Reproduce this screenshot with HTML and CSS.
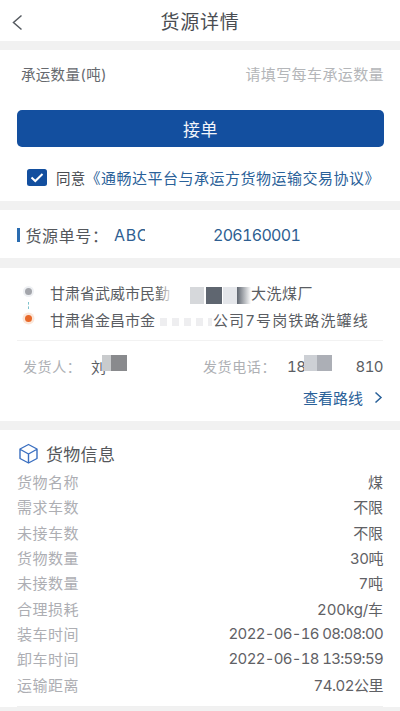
FILE: index.html
```html
<!DOCTYPE html>
<html lang="zh-CN">
<head>
<meta charset="utf-8">
<title>货源详情</title>
<link rel="stylesheet" href="styles.css">
</head>
<body>
<div class="page">
  <header class="topbar">
    <svg class="back" width="14" height="18" viewBox="0 0 14 18"><path d="M11.500 1.500 3.500 8.500l8 7" fill="none" stroke="#555a60" stroke-width="1.500"/></svg>
    <h1 class="title">货源详情</h1>
  </header>

  <section class="card accept">
    <div class="qty"><span class="qty-label">承运数量(吨)</span><span class="qty-hint">请填写每车承运数量</span></div>
    <button class="btn">接单</button>
    <div class="agree">
      <svg class="check" width="20" height="17" viewBox="0 0 20 17"><rect width="20" height="17" rx="2.500" fill="#134f9f"/><path d="M4.500 8.500 8.300 12l7.200-7" fill="none" stroke="#fff" stroke-width="2"/></svg>
      <span class="agree-text">同意</span><span class="agree-link">《通畅达平台与承运方货物运输交易协议》</span>
    </div>
  </section>

  <section class="card order">
    <i class="bar"></i><span class="order-label">货源单号：</span><span class="order-a">ABC</span><i class="order-mask"></i><span class="order-b">206160001</span>
  </section>

  <section class="card route">
    <div class="stops">
      <div class="stop">
        <span class="dot dot-gray"></span><span class="addr a1">甘肃省武威市民勤</span><span class="addr a1b">大洗煤厂</span>
      </div>
      <i class="link"></i>
      <div class="stop">
        <span class="dot dot-orange"></span><span class="addr a2">甘肃省金昌市金</span><span class="addr a2b">公司7号岗铁路洗罐线</span>
      </div>
      <div class="mask"><i class="m1"></i><i class="m2"></i><i class="m3"></i><i class="m4"></i><i class="m5"></i><i class="m6"></i></div>
    </div>
    <div class="people">
      <span class="p-label">发货人：</span><span class="p-val p-name">刘</span><span class="blk blk-name"></span>
      <span class="p-label p-phone">发货电话：</span><span class="p-val p-18">18</span><span class="blk blk-p1"></span><span class="blk blk-p2"></span><span class="p-val p-810">810</span>
    </div>
    <div class="path"><span>查看路线</span>
      <svg width="9" height="13" viewBox="0 0 9 13"><path d="M1.500 1.500 7 6.500l-5.500 5" fill="none" stroke="#2a6199" stroke-width="1.500"/></svg>
    </div>
  </section>

  <section class="card goods">
    <div class="goods-head">
      <svg width="21" height="21" viewBox="0 0 21 21"><path d="M10.500 1.500 19 6v9.500l-8.500 4.500L2 15.500V6zM2.500 6.500l8 4.500 8-4.500M10.500 11v8.500" fill="none" stroke="#3a6fc0" stroke-width="1.400" stroke-linejoin="round"/></svg>
      <span>货物信息</span>
    </div>
    <div class="rows">
      <div class="row"><span class="k">货物名称</span><span class="v">煤</span></div>
      <div class="row"><span class="k">需求车数</span><span class="v">不限</span></div>
      <div class="row"><span class="k">未接车数</span><span class="v">不限</span></div>
      <div class="row"><span class="k">货物数量</span><span class="v v-num">30吨</span></div>
      <div class="row"><span class="k">未接数量</span><span class="v">7吨</span></div>
      <div class="row"><span class="k">合理损耗</span><span class="v">200kg/车</span></div>
      <div class="row"><span class="k">装车时间</span><span class="v v-time">2022-06-16 08:08:00</span></div>
      <div class="row"><span class="k">卸车时间</span><span class="v v-time">2022-06-18 13:59:59</span></div>
      <div class="row"><span class="k">运输距离</span><span class="v v-num">74.02公里</span></div>
    </div>
    <div class="rule"></div>
  </section>
</div>
</body>
</html>
```

FILE: styles.css
```css
* { box-sizing: border-box; }
html, body { margin: 0; padding: 0; }
body { width: 400px; height: 711px; overflow: hidden; background: #f1f1f1; font-family: Inter, "Noto Sans CJK SC", "Noto Sans", sans-serif; font-variant-numeric: tabular-nums; }
.page { display: flex; flex-direction: column; }
.card { background: #fff; }

.topbar { height: 41px; padding-top: 4px; background: #fff; display: flex; align-items: center; justify-content: center; position: relative; margin-bottom: 9px; }
.back { position: absolute; left: 10px; top: 14px; }
.title { margin: 0; font-size: 19px; font-weight: 400; color: #4a4d52; letter-spacing: .8px; line-height: 37px; }

.accept { height: 151px; margin-bottom: 9px; padding: 0 16px 0 17px; display: flex; flex-direction: column; }
.qty { height: 46px; margin-bottom: 14px; display: flex; justify-content: space-between; align-items: center; padding: 0 0 0 4px; }
.qty-label { font-size: 14.500px; color: #66696e; letter-spacing: .3px; }
.qty-hint { font-size: 15px; letter-spacing: .4px; color: #b4b6b9; }
.btn { height: 37px; width: 367px; border: 0; border-radius: 5px; background: #134f9f; color: #f2f5fa; font: inherit; font-size: 17px; letter-spacing: .5px; padding: 0; }
.agree { display: flex; align-items: center; margin-top: 20px; padding-left: 10px; height: 20px; }
.check { flex: none; margin-right: 9px; }
.agree-text { font-size: 14.500px; color: #4a4d52; letter-spacing: .3px; }
.agree-link { font-size: 15px; color: #2a6199; letter-spacing: .5px; white-space: nowrap; }

.order { height: 48px; padding-top: 2px; margin-bottom: 10px; display: flex; align-items: center; padding-left: 17px; position: relative; }
.bar { width: 2.500px; height: 14px; background: #2a6cb0; margin-right: 6px; }
.order-label { font-size: 16px; color: #55585c; letter-spacing: .6px; width: 88.500px; white-space: nowrap; }
.order-a { font-size: 16px; letter-spacing: .6px; color: #2f5f92; width: 32px; white-space: nowrap; }
.order-mask { position: absolute; left: 145px; top: 0; bottom: 0; width: 14px; background: #fff; }
.order-b { font-size: 16px; letter-spacing: -.7px; color: #2f5f92; margin-left: 67px; }

.route { height: 153px; margin-bottom: 9px; padding: 0 17px; }
.stops { position: relative; height: 73px; border-bottom: 1px solid #f2f2f2; padding-top: 14px; }
.stop { display: flex; align-items: center; height: 20px; position: relative; }
.link { display: block; margin-left: 11px; width: 1px; height: 7px; border-left: 1px dashed #7fc3cc; }
.dot { position: absolute; border-radius: 50%; width: 7px; height: 7px; left: 7.500px; }
.dot-gray { background: #a3a5ab; box-shadow: 0 0 0 2px #eef0f3; top: 6px; }
.dot-orange { background: #e8692a; box-shadow: 0 0 0 2.500px #fbe7da; top: 6px; }
.addr { font-size: 15px; color: #5a5d63; white-space: nowrap; position: absolute; }
.a1 { left: 33px; }
.a1b { left: 234px; letter-spacing: .5px; }
.a2 { left: 33px; }
.a2b { left: 196px; letter-spacing: 1.100px; }
.mask { position: absolute; inset: 0; pointer-events: none; }
.mask i { position: absolute; display: block; }
.m1 { left: 140px; top: 14px; width: 56px; height: 32px; background: linear-gradient(90deg, rgba(255,255,255,0), #fff 30%, #fff 100%); }
.m2 { left: 173px; top: 19px; width: 14px; height: 17px; background: #d6d8db; }
.m3 { left: 189px; top: 19px; width: 16px; height: 17px; background: #5f6670; }
.m4 { left: 206px; top: 19px; width: 14px; height: 17px; background: #e4e6ea; }
.m5 { left: 220px; top: 19px; width: 14px; height: 17px; background: linear-gradient(90deg, #5f6670, rgba(255,255,255,0)); }
.m6 { left: 143px; top: 50px; width: 52px; height: 8px; background: repeating-linear-gradient(90deg, #eeeef0 0 7px, #fff 7px 12px); }

.people { height: 44px; display: flex; align-items: center; padding-top: 6px; position: relative; }
.p-label { position: absolute; left: 6px; font-size: 14px; letter-spacing: .6px; color: #aeb0b4; }
.p-phone { left: 186px; }
.p-val { position: absolute; font-size: 15px; color: #5b5e63; letter-spacing: -.6px; }
.p-name { left: 74px; }
.p-18 { left: 270px; }
.p-810 { right: 0; }
.blk { position: absolute; top: 14px; height: 16px; }
.blk-name { left: 85px; width: 25px; background: linear-gradient(90deg, #c9cbcd 0, #c9cbcd 35%, #898a8d 35%); }
.blk-p1 { left: 287px; width: 13px; background: #cdd0d5; }
.blk-p2 { left: 300px; width: 15px; background: #acafb6; }

.path { display: flex; justify-content: flex-end; align-items: center; gap: 11px; color: #2a6199; font-size: 15px; height: 20px; margin-top: 2px; }

.goods { flex: 1; padding: 0 17px; }
.goods-head { height: 46px; display: flex; align-items: center; gap: 7px; padding-left: 1px; font-size: 17px; color: #55585c; letter-spacing: .3px; }
.rows { display: flex; flex-direction: column; margin-top: -7px; }
.row { height: 25.300px; display: flex; justify-content: space-between; align-items: center; font-size: 15px; }
.k { color: #adaeb3; letter-spacing: .5px; }
.v { color: #5f6165; letter-spacing: -.1px; }
.v-num { letter-spacing: -.5px; }
.v-time { letter-spacing: -.7px; }
.rule { height: 1px; background: #f0f0f0; margin-top: 9px; }
```
